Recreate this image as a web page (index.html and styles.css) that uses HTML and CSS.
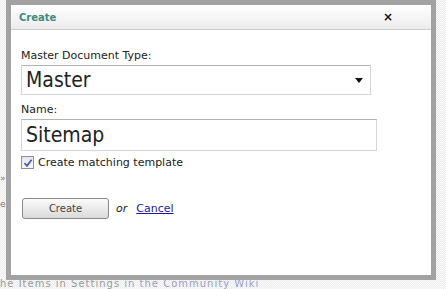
FILE: index.html
```html
<!DOCTYPE html>
<html lang="en">
  <head>
    <meta charset="UTF-8" />
    <title>Create</title>
    <link rel="stylesheet" href="styles.css">
  </head>
  <body>
    <div class="page">
      <div class="side">
        <span class="side-mark">&#187;</span>
        <span class="side-mark">e</span>
      </div>
      <p class="behind">he Items in Settings <span class="behind-link">in the Community Wiki</span></p>
    </div>

    <div class="dialog">
      <div class="dialog-head">
        <span class="dialog-title">Create</span>
        <span class="dialog-close">&#215;</span>
      </div>
      <div class="dialog-body">
        <label class="field-label">Master Document Type:</label>
        <div class="select">
          <span class="select-value">Master</span>
          <span class="select-arrow"></span>
        </div>

        <label class="field-label">Name:</label>
        <div class="text-input">Sitemap</div>

        <div class="check-row">
          <span class="checkbox">
            <svg width="10" height="10" viewBox="0 0 10 10">
              <path d="M1.5 5.2 L4 7.8 L8.6 1.8" fill="none" stroke="#4a5fa8" stroke-width="1.8" />
            </svg>
          </span>
          <span class="check-label">Create matching template</span>
        </div>

        <div class="actions">
          <button class="create-btn">Create</button>
          <span class="or">or</span>
          <a class="cancel" href="#">Cancel</a>
        </div>
      </div>
    </div>
  </body>
</html>
```

FILE: styles.css
```css
body {
  margin: 0;
  width: 446px;
  height: 289px;
  overflow: hidden;
  position: relative;
  font-family: "DejaVu Sans", Verdana, sans-serif;
  background: repeating-conic-gradient(#ececec 0 25%, #fbfbfb 0 50%) 0 0 / 2px 2px;
}

.page {
  height: 289px;
  display: flex;
  flex-direction: column;
  justify-content: space-between;
}

.side {
  display: flex;
  flex-direction: column;
  gap: 14px;
  padding-top: 172px;
}

.side-mark {
  font-size: 9px;
  color: #777;
  line-height: 12px;
}

.behind {
  margin: 0;
  font-size: 10px;
  letter-spacing: 1px;
  line-height: 10px;
  height: 10px;
  color: #9a9a9a;
  white-space: nowrap;
}

.behind-link {
  color: #9aa0c8;
}

.dialog {
  position: absolute;
  left: 6px;
  top: 0;
  width: 420px;
  height: 270px;
  border: 5px solid #a2a2a2;
  background: #fff;
}

.dialog-head {
  height: 24px;
  border-bottom: 1px solid #cfcfcf;
  background: linear-gradient(#ffffff, #ececec);
  display: flex;
  align-items: center;
  justify-content: space-between;
  padding: 0 38px 0 8px;
}

.dialog-title {
  font-size: 10px;
  font-weight: bold;
  color: #3f8b7c;
}

.dialog-close {
  font-size: 12px;
  font-weight: bold;
  color: #111;
}

.dialog-body {
  padding: 19px 10px 0 10px;
  display: flex;
  flex-direction: column;
  align-items: flex-start;
}

.field-label {
  font-size: 11px;
  color: #222;
  line-height: 13px;
  margin-bottom: 3px;
}

.select {
  width: 344px;
  height: 28px;
  border: 1px solid #d6d6d6;
  border-top-color: #b3b3b3;
  display: flex;
  align-items: center;
  justify-content: space-between;
  padding: 0 0 0 4px;
  margin-bottom: 8px;
}

.select-value {
  font-family: "DejaVu Sans Condensed", "DejaVu Sans", sans-serif;
  font-size: 21px;
  color: #222;
}

.select-arrow {
  width: 0;
  height: 0;
  border-left: 4px solid transparent;
  border-right: 4px solid transparent;
  border-top: 5px solid #111;
  margin-right: 7px;
}

.text-input {
  width: 350px;
  height: 30px;
  line-height: 30px;
  border: 1px solid #d6d6d6;
  border-top-color: #b3b3b3;
  padding-left: 4px;
  font-family: "DejaVu Sans Condensed", "DejaVu Sans", sans-serif;
  font-size: 21px;
  color: #222;
}

.check-row {
  display: flex;
  align-items: center;
  gap: 4px;
  margin-top: 5px;
}

.checkbox {
  width: 11px;
  height: 11px;
  border: 1px solid #8f8f9f;
  background: linear-gradient(#e6e6ea, #fafafa);
  display: flex;
  align-items: center;
  justify-content: center;
}

.check-label {
  font-size: 11px;
  color: #222;
}

.actions {
  display: flex;
  align-items: center;
  margin-top: 29px;
  margin-left: 1px;
}

.create-btn {
  width: 87px;
  height: 21px;
  border: 1px solid #8a8a8a;
  border-radius: 3px;
  background: linear-gradient(#fbfbfb, #dadada);
  font-family: "DejaVu Sans", Verdana, sans-serif;
  font-size: 10px;
  color: #444;
  padding: 0;
}

.or {
  font-size: 11px;
  font-style: italic;
  color: #222;
  margin-left: 7px;
}

.cancel {
  font-size: 11px;
  color: #1a1aa6;
  margin-left: 9px;
}
```
